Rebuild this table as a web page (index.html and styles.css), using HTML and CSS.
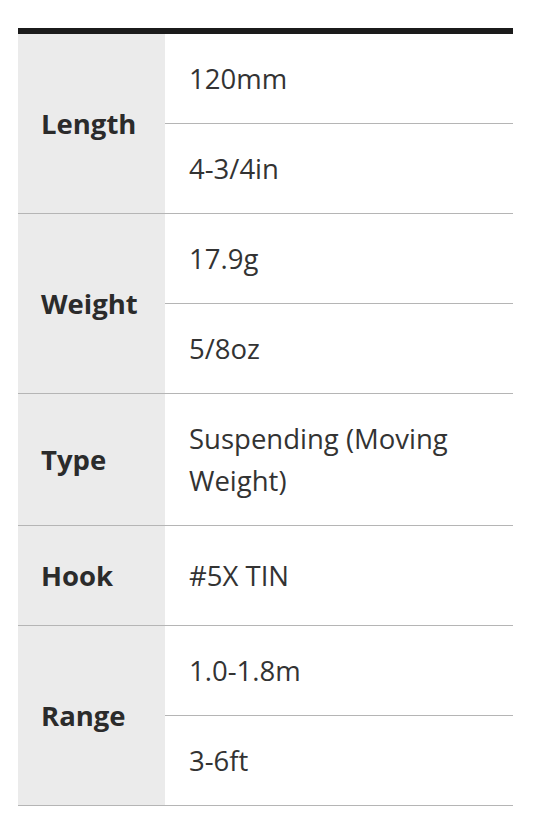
FILE: index.html
```html
<!DOCTYPE html>
<html lang="en">
<head>
<meta charset="utf-8">
<title>Specs</title>
<link rel="stylesheet" href="styles.css">
</head>
<body>
<table class="spec">
  <tbody>
    <tr>
      <th class="label" rowspan="2">Length</th>
      <td class="value">120mm</td>
    </tr>
    <tr>
      <td class="value">4-3/4in</td>
    </tr>
    <tr>
      <th class="label" rowspan="2">Weight</th>
      <td class="value">17.9g</td>
    </tr>
    <tr>
      <td class="value">5/8oz</td>
    </tr>
    <tr>
      <th class="label">Type</th>
      <td class="value">Suspending (Moving Weight)</td>
    </tr>
    <tr>
      <th class="label">Hook</th>
      <td class="value">#5X TIN</td>
    </tr>
    <tr>
      <th class="label" rowspan="2">Range</th>
      <td class="value">1.0-1.8m</td>
    </tr>
    <tr>
      <td class="value">3-6ft</td>
    </tr>
  </tbody>
</table>
</body>
</html>
```
FILE: styles.css
```css
html, body {
  margin: 0;
  padding: 0;
  background: #ffffff;
}
body {
  padding: 28px 0 0 18px;
  font-family: "Open Sans", "Liberation Sans", sans-serif;
  color: #333333;
}
.spec {
  width: 495px;
  border-collapse: separate;
  border-spacing: 0;
  border-top: 6px solid #1b1b1b;
  font-size: 27.5px;
  line-height: 42px;
}
.label {
  width: 147px;
  box-sizing: border-box;
  background: #ebebeb;
  text-align: left;
  font-weight: 700;
  color: #2b2b2b;
  padding: 28.5px 8px 28.5px 23px;
  vertical-align: middle;
  border-bottom: 1px solid #b5b5b5;
}
.value {
  padding: 23.5px 20px 23.5px 24px;
  vertical-align: middle;
  font-weight: 400;
  border-bottom: 1px solid #b5b5b5;
}
```
